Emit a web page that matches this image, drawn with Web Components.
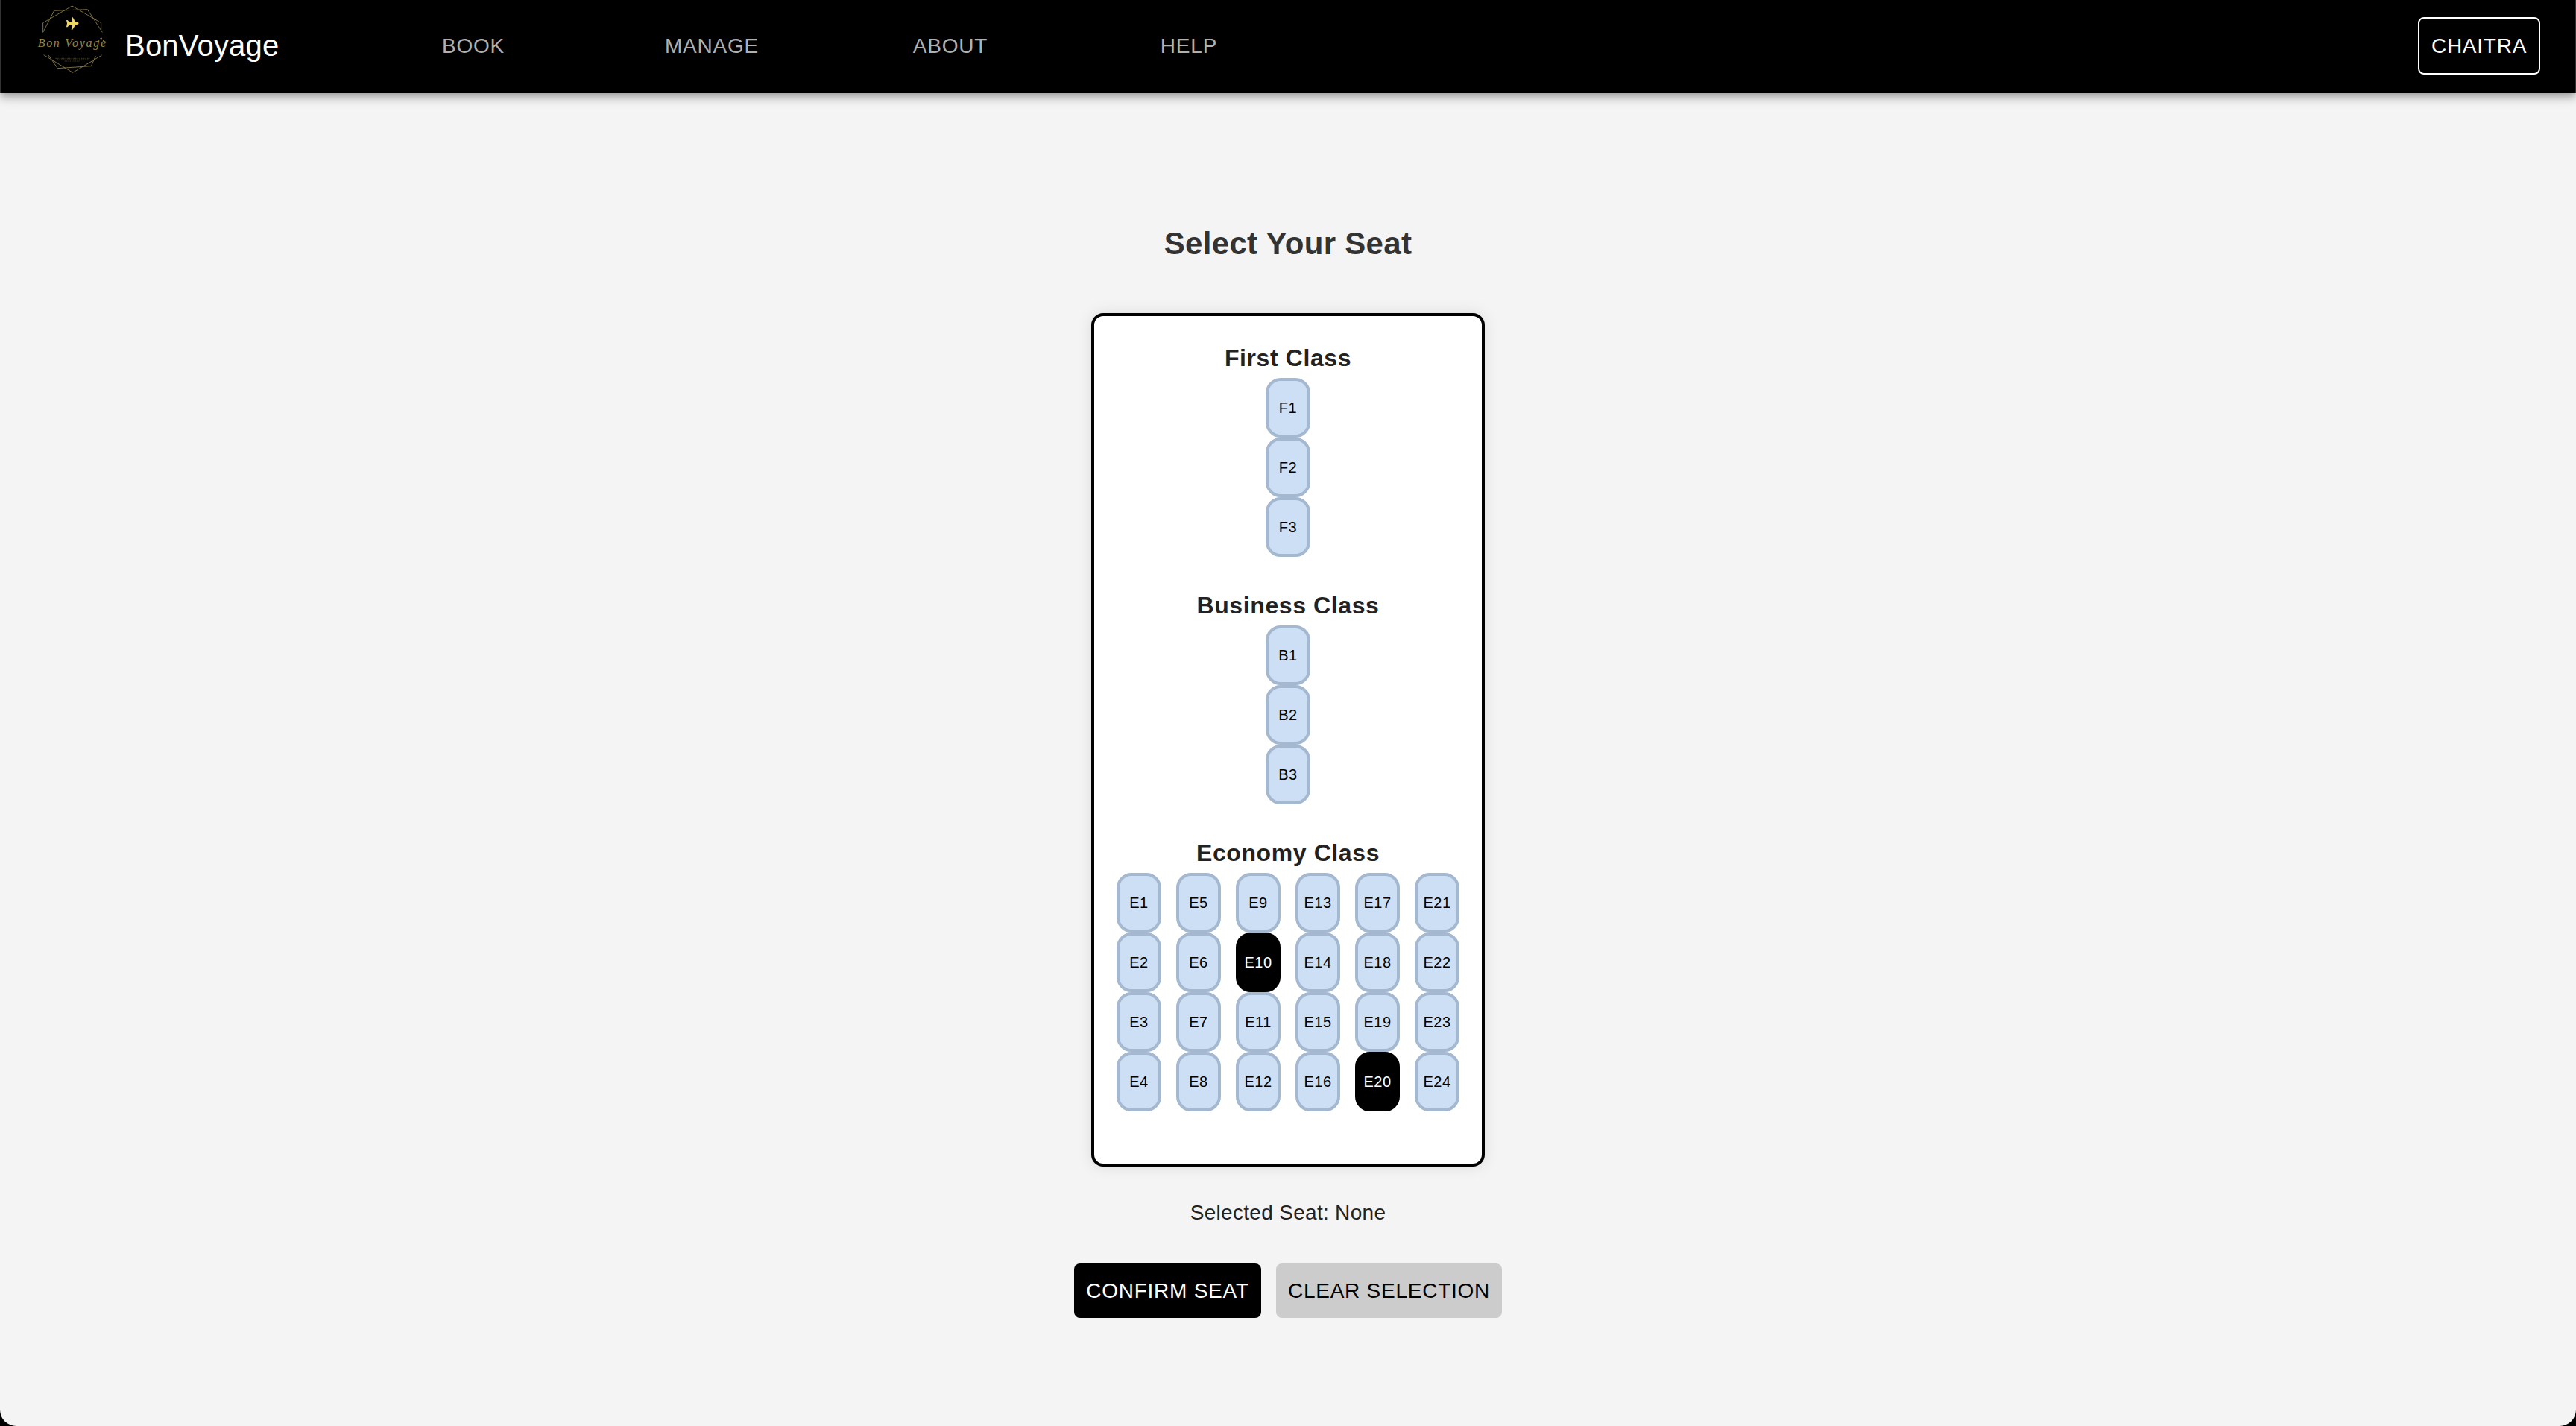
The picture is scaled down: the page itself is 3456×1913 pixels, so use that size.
<!DOCTYPE html>
<html lang="en">
<head>
<meta charset="utf-8">
<title>BonVoyage</title>
<style>
html,body{margin:0;height:100%;background:#000}
body{font-family:"Liberation Sans",Arial,Helvetica,sans-serif;overflow:hidden}
</style>
</head>
<body>
<seat-page></seat-page>
<script>
const define = (name, html) => customElements.define(name, class extends HTMLElement {
  connectedCallback() {
    if (this.shadowRoot) return;
    const t = document.createElement('template');
    t.innerHTML = typeof html === 'function' ? html(this) : html;
    this.attachShadow({ mode: 'open' }).append(t.content.cloneNode(true));
  }
});

define('brand-logo', `
<style>:host{display:block;width:120px;height:110px}svg{display:block}</style>
<svg width="120" height="110" viewBox="0 0 360 330" fill="none" stroke="#8d8149" stroke-width="2.6">
  <path d="M53 130V92L170 24L287 92V130M53 130L98 43L232 38L292 130"/>
  <path d="M56 221L173 292L290 222M75 222L112 275L247 266L265 225"/>
  <path d="M197 94C196 90 191 89 184 89L173 70L168 69L172 89L160 90L152 81L147 81L150 94L147 109L152 109L160 99L172 100L167 120L172 119L184 100C191 100 196 98 197 94Z" fill="#f3d562" stroke="none"/>
  <text x="32" y="190" font-family="Liberation Serif" font-style="italic" font-size="48" textLength="274" lengthAdjust="spacing" fill="#96863f" stroke="none">Bon Voyage</text>
  <path d="M287 150v9M283 155h8M278 162v5M296 160v6" stroke="#b7a34c" stroke-width="2.5"/>
  <path d="M103 235H241M110 240H238" stroke="#3f3b22" stroke-width="3" stroke-dasharray="5 3"/>
  <path d="M140 246H202" stroke="#3f3b22" stroke-width="3" stroke-dasharray="4 3"/>
</svg>`);

define('nav-item', `
<style>:host{display:block;width:320px;text-align:center;font-size:28px;line-height:49px;letter-spacing:.8px;color:#b0b0b0}</style><slot></slot>`);

define('action-button', `
<style>
:host{display:block;box-sizing:border-box;padding:12px 15px;border-radius:8px;font-size:28px;line-height:49px;letter-spacing:.75px;white-space:nowrap;text-align:center}
:host([kind=outline]){border:2px solid #fff;color:#fff;width:164px}
:host([kind=dark]){background:#000;color:#fff;width:251px}
:host([kind=light]){background:#ccc;color:#000;width:303px}
</style><slot></slot>`);

define('app-header', `
<style>
:host{display:flex;align-items:center;box-sizing:border-box;height:125px;padding:0 46px 2px 38px;background:#000;border:solid #333;border-width:0 2px;
 box-shadow:0 4px 8px -2px rgba(0,0,0,.2),0 8px 10px rgba(0,0,0,.14),0 2px 20px rgba(0,0,0,.12);position:relative}
brand-logo{align-self:flex-start}
.name{width:307px;margin-left:8px;padding-bottom:2px;font-size:40px;line-height:64px;letter-spacing:.2px;color:#fff}
nav{display:flex;flex:1}
</style>
<brand-logo></brand-logo><div class="name">BonVoyage</div>
<nav><nav-item>BOOK</nav-item><nav-item>MANAGE</nav-item><nav-item>ABOUT</nav-item><nav-item>HELP</nav-item></nav>
<action-button kind="outline">CHAITRA</action-button>`);

define('plane-seat', `
<style>
:host{display:flex;align-items:center;justify-content:center;box-sizing:border-box;width:60px;height:80px;border:4px solid #a4b8d0;border-radius:20px;background:#cddff5;color:#000;font-size:20px;line-height:35px;letter-spacing:.5px}
:host([taken]){background:#000;border-color:#000;color:#fff}
</style><slot></slot>`);

define('seat-section', el => {
  const p = el.getAttribute('prefix'), cols = +el.getAttribute('cols'), rows = +el.getAttribute('rows');
  const taken = (el.getAttribute('taken') || '').split(' ');
  let out = '';
  for (let c = 0; c < cols; c++) {
    out += '<div class="col">';
    for (let r = 1; r <= rows; r++) {
      const id = p + (c * rows + r);
      out += `<plane-seat${taken.includes(id) ? ' taken' : ''}>${id}</plane-seat>`;
    }
    out += '</div>';
  }
  return `<style>
:host{display:block;margin-bottom:39px}
h3{margin:0;font-size:32px;line-height:53px;font-weight:700;letter-spacing:.6px;color:#222;text-align:center}
.cols{display:flex;justify-content:center;gap:20px}.col{display:flex;flex-direction:column}
</style><h3><slot></slot></h3><div class="cols">${out}</div>`;
});

define('seat-map', `
<style>:host{display:block;box-sizing:border-box;width:528px;padding:30px 30px 31px;border:4px solid #000;border-radius:16px;background:#fff;box-shadow:0 0 20px rgba(0,0,0,.1)}</style><slot></slot>`);

define('seat-page', `
<style>
:host{display:flex;flex-direction:column;height:1913px;background:#f4f4f4;border-radius:0 0 22px 22px;overflow:hidden}
main{display:flex;flex-direction:column;align-items:center;padding-top:172px}
h1{margin:0 0 63px;font-size:42px;line-height:60px;letter-spacing:.3px;font-weight:700;color:#333}
p{margin:42px 0 48px;font-size:28px;line-height:40px;letter-spacing:.3px;color:#222}
.actions{display:flex;gap:20px}
</style>
<app-header></app-header>
<main>
<h1>Select Your Seat</h1>
<seat-map>
<seat-section prefix="F" cols="1" rows="3">First Class</seat-section>
<seat-section prefix="B" cols="1" rows="3">Business Class</seat-section>
<seat-section prefix="E" cols="6" rows="4" taken="E10 E20">Economy Class</seat-section>
</seat-map>
<p>Selected Seat: None</p>
<div class="actions"><action-button kind="dark">CONFIRM SEAT</action-button><action-button kind="light">CLEAR SELECTION</action-button></div>
</main>`);
</script>
</body>
</html>
